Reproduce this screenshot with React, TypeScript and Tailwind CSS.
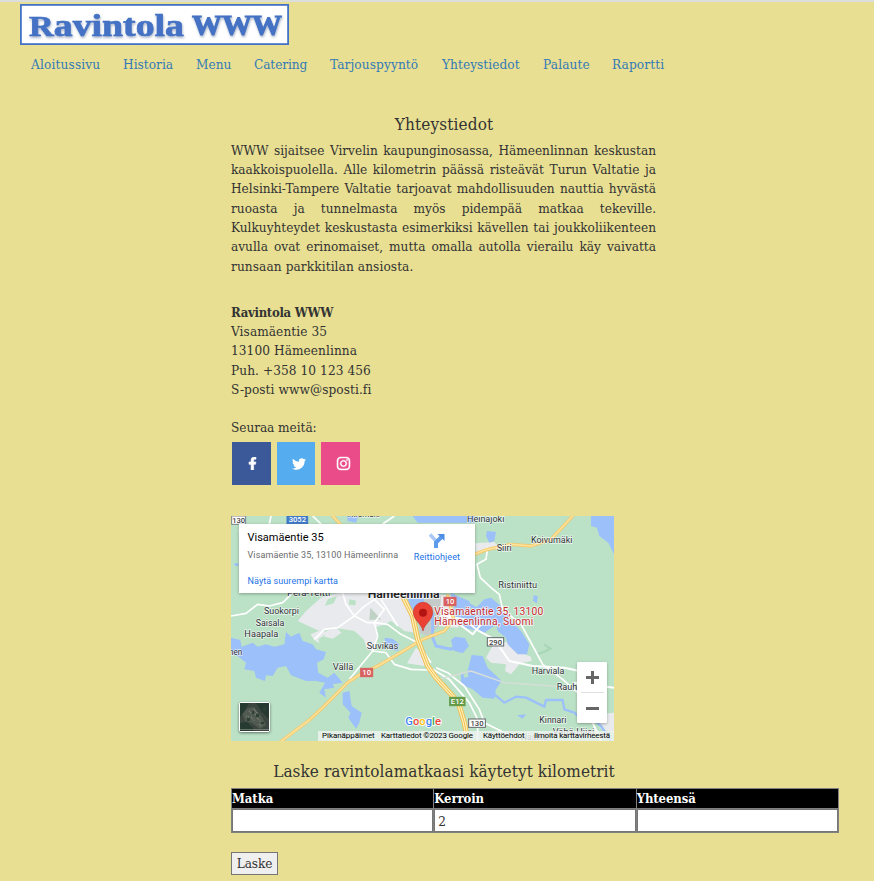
import type { ReactNode } from "react";
import { FaFacebookF, FaInstagram, FaTwitter } from "react-icons/fa";

const navItems = [
  { label: "Aloitussivu", box: "w-[92px] tracking-[0.16px]" },
  { label: "Historia", box: "w-[73px] tracking-[0.04px]" },
  { label: "Menu", box: "w-[58px] tracking-[0.02px]" },
  { label: "Catering", box: "w-[76px] tracking-[-0.08px]" },
  { label: "Tarjouspyyntö", box: "w-[112px] tracking-[0.12px]" },
  { label: "Yhteystiedot", box: "w-[101px] tracking-[0.06px]" },
  { label: "Palaute", box: "w-[69px] tracking-[0.16px]" },
  { label: "Raportti", box: "w-[60px] tracking-[0.12px]" },
];

const intro = [
  "WWW sijaitsee Virvelin kaupunginosassa, Hämeenlinnan keskustan",
  "kaakkoispuolella. Alle kilometrin päässä risteävät Turun Valtatie ja",
  "Helsinki-Tampere Valtatie tarjoavat mahdollisuuden nauttia hyvästä",
  "ruoasta ja tunnelmasta myös pidempää matkaa tekeville.",
  "Kulkuyhteydet keskustasta esimerkiksi kävellen tai joukkoliikenteen",
  "avulla ovat erinomaiset, mutta omalla autolla vierailu käy vaivatta",
];

function Logo() {
  return (
    <svg width="269" height="41" viewBox="0 0 269 41" className="block">
      <defs>
        <filter id="logoShadow" x="-5%" y="-20%" width="110%" height="150%">
          <feDropShadow dx="0.6" dy="1.6" stdDeviation="0.9" floodColor="#6b7f9f" floodOpacity="0.6" />
        </filter>
      </defs>
      <rect x="0.9" y="0.9" width="267.2" height="39.2" fill="#fff" stroke="#4472c4" strokeWidth="1.8" />
      <g
        fill="#4472c4"
        stroke="#4472c4"
        strokeWidth="0.7"
        filter="url(#logoShadow)"
        style={{ fontFamily: '"Liberation Serif", serif', fontWeight: 700 }}
      >
        <text x="9" y="31.5" textLength="155" lengthAdjust="spacingAndGlyphs">
          <tspan fontSize="29">R</tspan>
          <tspan fontSize="32">avintola</tspan>
        </text>
        <text x="172" y="31" fontSize="29" strokeWidth="1" textLength="90" lengthAdjust="spacingAndGlyphs">WWW</text>
      </g>
    </svg>
  );
}

function Label({ x, y, w, children, size = 27 }: { x: number; y: number; w: number; children: ReactNode; size?: number }) {
  return (
    <text x={x} y={y} fontSize={size} textLength={w} lengthAdjust="spacingAndGlyphs" fill="#2f3237" stroke="#fff" strokeWidth="4" strokeOpacity="0.7" paintOrder="stroke">
      {children}
    </text>
  );
}

function Shield({ x, y, w, h = 25, fill, color = "#fff", border, children }: { x: number; y: number; w: number; h?: number; fill: string; color?: string; border?: string; children: ReactNode }) {
  return (
    <g>
      <rect x={x} y={y} width={w} height={h} fill={fill} stroke={border ?? fill} strokeWidth="3" />
      <text x={x + w / 2} y={y + h - 4} fontSize="23" fontWeight="500" textAnchor="middle" fill={color}>
        {children}
      </text>
    </g>
  );
}

function MapDrawing() {
  return (
    <svg width="383" height="225" viewBox="0 0 1149 675" className="block" style={{ fontFamily: "Roboto, sans-serif" }}>
      <rect width="1149" height="675" fill="#bbe2c6" />
      {/* built-up areas */}
      <g fill="#e8eaed">
        <path d="M225 285 270 245 320 231 500 231 520 260 545 320 552 350 520 345 480 315 460 325 430 335 440 350 425 405 408 400 398 370 370 345 340 340 300 335 265 345 200 315Z" />
        <path d="M238 355 270 342 290 350 262 370 265 382 250 372Z" />
        <path d="M285 345 315 335 332 350 305 368 280 362Z" />
        <path d="M555 395 585 420 580 450 528 442Z" />
        <path d="M765 425 790 380 830 378 845 400 900 422 902 435 868 442 840 475 822 465 825 445 780 440Z" />
        <path d="M590 235 660 238 665 300 700 310 680 335 620 330 590 340Z" />
        <path d="M1090 595 1149 590 1149 650 1110 640Z" />
        <path d="M732 82 790 78 805 95 735 112Z" />
      </g>
      <path d="M560 270 605 232 630 240 625 330 590 360 565 350Z" fill="#c5cbc8" />
      <path d="M418 275 450 310 415 312Z" fill="#bfd2c5" />
      <path d="M290 250 318 240 308 262 282 270ZM355 250l20 4-2 14-20-2Z" fill="#bbe2c6" />
      {/* lakes and rivers */}
      <g fill="#9cc0f9">
        <path d="M0 365 28 372 32 392 65 380 80 392 105 385 130 392 160 385 165 348 180 362 205 350 215 375 245 385 255 400 285 408 278 430 258 440 262 470 290 485 310 470 335 500 305 505 310 515 280 520 285 545 265 530 282 500 255 495 225 495 180 478 165 450 140 455 125 480 105 478 102 495 75 485 70 465 40 460 45 440 20 420 0 415Z" />
        <path d="M335 530 355 525 362 570 392 590 385 620 375 638 352 605 358 590 335 565Z" />
        <path d="M528 231 582 231 575 280 558 320 535 275Z" />
        <path d="M665 235 715 255 720 290 760 250 780 245 810 270 805 310 790 330 760 350 700 335 672 305Z" />
        <path d="M790 300 820 280 840 315 870 345 895 385 888 415 860 415 830 385 825 365 800 345Z" />
        <path d="M660 372 672 362 702 366 714 390 695 412 668 404Z" />
        <path d="M722 417 755 420 770 455 812 495 795 520 790 548 755 545 725 520 690 505 690 475 710 465Z" />
        <path d="M1080 0 1149 0 1149 115 1132 80 1105 60 1098 35 1080 30Z" />
        <path d="M545 0 730 0 730 20 560 20Z" />
        <path d="M768 45 795 48 790 75 775 80 765 60Z" />
        <path d="M908 238 920 240 918 262 906 255Z" />
        <path d="M460 365 485 368 505 385 500 405 478 400 465 385Z" />
        <path d="M10 142h12v8h-10Z" />
        <path d="M348 0 382 0 375 20 350 15Z" />
        <path d="M858 598 885 595 875 608Z" />
      </g>
      <g fill="none" stroke="#9cc0f9" strokeWidth="9" strokeLinejoin="round">
        <path d="M605 290V365L615 390 660 400 690 380M660 235 730 275 800 300" />
        <path d="M790 535 820 560 855 542 885 545 940 572 945 552 995 552 1000 580 1030 590 1045 605 1075 600 1110 630 1140 675" strokeWidth="7" />
      </g>
      <path d="M697 475 710 468 712 482 700 485Z" fill="#bbe2c6" />
      <path d="M918 415 945 405 958 398 940 385" fill="none" stroke="#a9d6b6" strokeWidth="7" />
      {/* minor roads */}
      <g fill="none" stroke="#fff" strokeWidth="5" strokeLinejoin="round">
        <path d="M0 300 45 292 80 265 115 270 155 260 185 231M25 50 28 20M120 0 115 24M245 0 270 24M455 24 490 0" />
        <path d="M335 231 345 265 370 300 410 320 430 320 470 325 510 355 560 380M370 300 320 335 280 340 250 370M370 300 395 275 430 250" />
        <path d="M430 250 460 280 430 320 440 360 425 405 355 490M450 250 500 330M425 405 465 410 490 445 540 460 590 462 615 475" />
        <path d="M615 455 650 470 700 510 745 580 760 620 870 675M605 460 655 490 715 560 740 610 740 675M560 380 600 440" />
        <path d="M740 112 770 95 765 130 738 145 748 185 780 215 805 235 815 280 870 325 900 380 935 445 995 490 1040 530" />
        <path d="M640 300 700 310 735 340 790 370 835 435 905 450 1000 455 1045 465M680 320 725 355 750 325M1030 500 1149 515M1085 620 1110 675" strokeWidth="6" />
        <path d="M620 490 720 465 820 500 900 505 1020 515" stroke="#d7ded9" strokeWidth="4" />
      </g>
      {/* highways */}
      <g fill="none" strokeLinejoin="round" strokeLinecap="round">
        <path d="M145 680 235 612 280 570 350 500 395 470 440 450 500 415 575 370 640 345 668 310 650 240M730 115 770 100 840 85 900 90 960 70 1025 0M305 0 335 32" stroke="#f2c86c" strokeWidth="10" />
        <path d="M145 680 235 612 280 570 350 500 395 470 440 450 500 415 575 370 640 345 668 310 650 240M730 115 770 100 840 85 900 90 960 70 1025 0M305 0 335 32" stroke="#fee29a" strokeWidth="5" />
        <path d="M515 240 545 300 560 370 590 450 615 485 665 540 685 570 700 620 712 680" stroke="#efc058" strokeWidth="16" />
        <path d="M515 240 545 300 560 370 590 450 615 485 665 540 685 570 700 620 712 680" stroke="#fff1b9" strokeWidth="10" />
        <path d="M515 240 545 300 560 370 590 450 615 485 665 540 685 570 700 620 712 680" stroke="#f0bd50" strokeWidth="3" />
      </g>
      <Label x={350} y={4} w={96}>Hirsmäki</Label>
      <Label x={708} y={17} w={112}>Heinäjoki</Label>
      <Label x={797} y={105} w={45}>Siiri</Label>
      <Label x={900} y={82} w={124}>Koivumäki</Label>
      <Label x={802} y={217} w={116}>Ristiniittu</Label>
      <Label x={168} y={240} w={130}>Perä-Teitti</Label>
      <Label x={99} y={294} w={105}>Suokorpi</Label>
      <Label x={74} y={329} w={86}>Saisala</Label>
      <Label x={40} y={363} w={102}>Haapala</Label>
      <Label x={-6} y={418} w={40}>nen</Label>
      <Label x={407} y={399} w={95}>Suvikas</Label>
      <Label x={305} y={462} w={62}>Vällä</Label>
      <Label x={902} y={474} w={98}>Harviala</Label>
      <Label x={977} y={521} w={62}>Rauh</Label>
      <Label x={925} y={622} w={81}>Kinnari</Label>
      <Label x={965} y={656} w={125}>Vähä-Hiisi</Label>
      <Label x={870} y={671} w={80}>Nästilä</Label>
      <text x="410" y="246" fontSize="32" fontWeight="600" textLength="216" lengthAdjust="spacingAndGlyphs" fill="#202124" stroke="#fff" strokeWidth="4" paintOrder="stroke">Hämeenlinna</text>
      <Shield x={2} y={0} w={42} fill="#fff" color="#444" border="#7b7f84">130</Shield>
      <Shield x={168} y={0} w={62} h={23} fill="#3f78c8">3052</Shield>
      <Shield x={639} y={244} w={36} fill="#d8605f">10</Shield>
      <Shield x={389} y={457} w={36} fill="#d8605f">10</Shield>
      <Shield x={769} y={365} w={49} fill="#fff" color="#444" border="#62666b">290</Shield>
      <Shield x={656} y={544} w={46} fill="#639a45">E12</Shield>
      <Shield x={713} y={609} w={50} fill="#fff" color="#444" border="#62666b">130</Shield>
      {/* destination marker */}
      <path d="M576 345C572 322 547 314 547 288a29 29 0 0 1 58 0C605 314 580 322 576 345Z" fill="#ea4335" stroke="#c5372c" strokeWidth="2" />
      <circle cx="576" cy="290" r="12" fill="#b31412" />
      <g fill="#c5292d" stroke="#fff" strokeWidth="5" strokeOpacity="0.8" paintOrder="stroke" fontSize="31">
        <text x="610" y="296" textLength="327" lengthAdjust="spacing">Visamäentie 35, 13100</text>
        <text x="610" y="328" textLength="297" lengthAdjust="spacing">Hämeenlinna, Suomi</text>
      </g>
      <text x="523" y="627" fontSize="34" fontWeight="500" textLength="107" lengthAdjust="spacingAndGlyphs" stroke="#fff" strokeWidth="5" paintOrder="stroke">
        <tspan fill="#4285f4">G</tspan><tspan fill="#ea4335">o</tspan><tspan fill="#fbbc04">o</tspan><tspan fill="#4285f4">g</tspan><tspan fill="#34a853">l</tspan><tspan fill="#ea4335">e</tspan>
      </text>
    </svg>
  );
}

function Satellite() {
  return (
    <svg width="29" height="28" viewBox="0 0 29 28" className="block">
      <rect width="29" height="28" fill="#3a463f" />
      <path d="M2 10 8 5 14 4 22 14 26 22 20 26 12 20 5 18Z" fill="#515a51" />
      <path d="M0 0h9L4 9 0 14ZM16 0h13v16L22 9ZM0 20l7-1 6 6v3H0Z" fill="#263a31" />
      <path d="M9 8l3 3M14 6l3 4M11 14l4 4M17 15l4 4M6 13l3 1M19 21l3 3M15 11l2 2" stroke="#81857b" strokeWidth="1.2" strokeDasharray="1 1" />
      <path d="M16 11h3v3h-3ZM7 15h3v3H7ZM21 19h3v2h-3ZM12 8h2v3h-2ZM23 4h3v4h-3Z" fill="#2e4035" />
      <path d="M0 26.5H29" stroke="#929b94" strokeWidth="0.6" />
    </svg>
  );
}

function MapPanel() {
  return (
    <div className="relative mt-[31px] h-[225px] w-[383px] overflow-hidden font-[Roboto,sans-serif]">
      <MapDrawing />
      <div className="absolute top-2 left-2 flex h-[69px] w-[236px] justify-between bg-white pt-[6px] pr-[15px] pl-[8.5px] shadow-[0_1px_3px_rgba(0,0,0,0.3)]">
        <div className="whitespace-nowrap">
          <p className="text-[11px] leading-[15px] text-black">Visamäentie 35</p>
          <p className="mt-[4px] text-[9px] leading-[13px] tracking-[0.12px] text-[#6b6b6b]">Visamäentie 35, 13100 Hämeenlinna</p>
          <p className="mt-[13px] text-[9px] leading-[13px] tracking-[0.08px] text-[#1a73e8]">Näytä suurempi kartta</p>
        </div>
        <div className="flex flex-col items-center">
          <svg width="16" height="16" viewBox="0 0 16 16" className="mt-[3px]">
            <path d="M1 1.5 7 8" stroke="#a9c8f5" strokeWidth="3.4" fill="none" />
            <path d="M7 15V9.5L12.5 4" stroke="#5e9bea" strokeWidth="4" fill="none" />
            <path d="M8.5 1H15.5V8Z" fill="#4c8de5" />
          </svg>
          <p className="mt-[2px] text-[9px] leading-[13px] tracking-[0.07px] text-[#1a73e8]">Reittiohjeet</p>
        </div>
      </div>
      <div className="absolute top-[186px] left-2 rounded-[2px] border border-white bg-white shadow-[0_1px_3px_rgba(0,0,0,0.5)]">
        <Satellite />
      </div>
      <div className="absolute top-[146px] right-[7px] flex h-[61px] w-[30px] flex-col items-center rounded-[1px] bg-white shadow-[0_1px_3px_rgba(0,0,0,0.3)]">
        <div className="flex h-[30px] items-center">
          <svg width="13" height="13" viewBox="0 0 13 13"><path d="M0 6.5H13M6.5 0V13" stroke="#666" strokeWidth="3" /></svg>
        </div>
        <div className="h-px w-[23px] bg-[#e0e0e0]" />
        <div className="flex h-[30px] items-center">
          <svg width="13" height="13" viewBox="0 0 13 13"><path d="M0 6.5H13" stroke="#666" strokeWidth="3" /></svg>
        </div>
      </div>
      <div className="absolute right-0 bottom-0 flex h-[10px] w-[296px] bg-[#f0f4f1]/80 pl-[4px] text-[8px] leading-[10px] tracking-[-0.05px] whitespace-nowrap text-black">
        <span className="w-[59px]">Pikanäppäimet</span>
        <span className="w-[102px] tracking-[-0.16px]">Karttatiedot ©2023 Google</span>
        <span className="w-[51px] tracking-[-0.16px]">Käyttöehdot</span>
        <span className="tracking-[-0.18px]">Ilmoita karttavirheestä</span>
      </div>
    </div>
  );
}

export default function App() {
  return (
    <div className="h-[881px] w-[874px] overflow-hidden border-t-2 border-[#dcdedc] bg-[#e8df92] text-[13.5px] leading-[19.3px] text-[#333] [font-family:'DejaVu_Serif_Condensed','DejaVu_Serif',serif]">
      <header className="pt-[2px] pl-5">
        <Logo />
        <nav className="mt-[10px] flex pl-[11px] text-[#337ab7]">
          {navItems.map((item) => (
            <a key={item.label} className={item.box}>{item.label}</a>
          ))}
        </nav>
      </header>
      <main className="ml-[231px] w-[608px]">
        <h1 className="mt-[38px] w-[426px] text-center text-[17px] leading-6 tracking-[0.15px]">Yhteystiedot</h1>
        <div className="mt-[4.5px] w-[425px] whitespace-nowrap">
          {intro.map((line) => (
            <p key={line} className="text-justify [text-align-last:justify]">{line}</p>
          ))}
          <p className="tracking-[0.1px]">runsaan parkkitilan ansiosta.</p>
        </div>
        <address className="mt-[27px] tracking-[0.08px] not-italic">
          <p className="text-[13px] font-bold tracking-[-0.3px]">Ravintola WWW</p>
          <p>Visamäentie 35</p>
          <p>13100 Hämeenlinna</p>
          <p>Puh. +358 10 123 456</p>
          <p>S-posti www@sposti.fi</p>
        </address>
        <p className="mt-[19px] tracking-[-0.05px]">Seuraa meitä:</p>
        <div className="mt-[4.5px] ml-px flex gap-[6px] text-[13px] text-white">
          <a className="flex h-[43px] w-[39px] items-center justify-center bg-[#3b5998] pl-[2px]"><FaFacebookF stroke="currentColor" strokeWidth={24} /></a>
          <a className="flex h-[43px] w-[38px] items-center justify-center bg-[#55acee] pl-[6px]"><FaTwitter size={14} /></a>
          <a className="flex h-[43px] w-[39px] items-center justify-center bg-[#ea4c89] pl-[5px]"><FaInstagram size={15} stroke="currentColor" strokeWidth={14} /></a>
        </div>
        <MapPanel />
        <h2 className="mt-[18px] w-[426px] text-center text-[17px] leading-6 tracking-[0.07px]">Laske ravintolamatkaasi käytetyt kilometrit</h2>
        <table className="mt-[5px] w-[608px] table-fixed border-collapse">
          <thead>
            <tr className="h-5 bg-black text-left text-[13px] leading-[18px] tracking-[-0.1px] text-white">
              <th className="border border-[#808080] p-0">Matka</th>
              <th className="border border-[#808080] p-0">Kerroin</th>
              <th className="border border-[#808080] p-0">Yhteensä</th>
            </tr>
          </thead>
          <tbody>
            <tr className="h-6">
              {["", "2", ""].map((value, i) => (
                <td key={i} className="border border-[#808080] p-0">
                  <input defaultValue={value} className="block h-[23px] w-full border border-[#767676] bg-white px-[3px]" />
                </td>
              ))}
            </tr>
          </tbody>
        </table>
        <button className="mt-[19px] h-[23px] w-[47px] border border-[#767676] bg-[#efefef] leading-[19px] tracking-[-0.1px]">Laske</button>
      </main>
    </div>
  );
}
